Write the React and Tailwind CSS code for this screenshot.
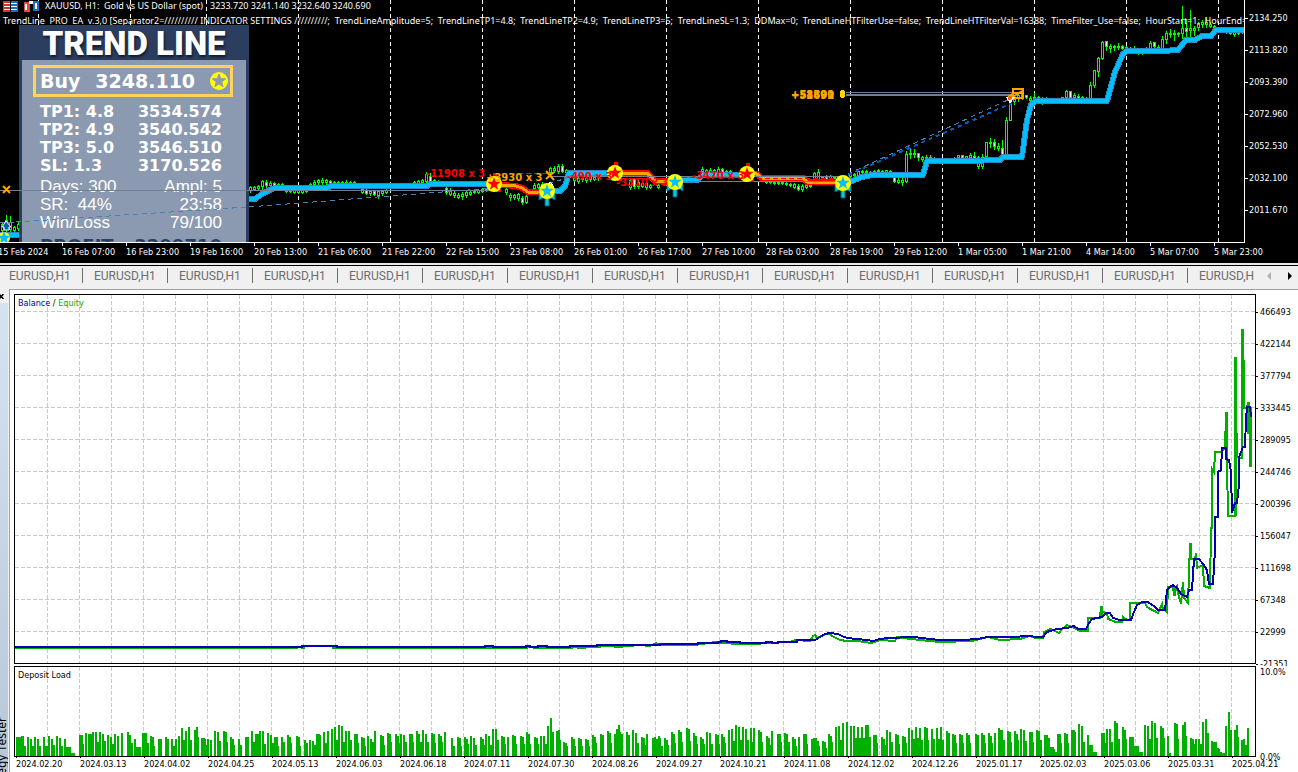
// [x, high, bodyTop, bodyBottom, low, bearish]
const CANDLES = [
  [2, 222, 224, 230, 231, 0], [6, 215, 220, 228, 231, 0], [10, 216, 222, 229, 232, 0], [14, 226, 227, 230, 231, 0], [18, 222, 224, 228, 230, 0],
  [250, 186, 187, 190, 192, 0], [254, 186, 187, 189, 190, 0], [258, 185, 186, 188, 189, 0], [262, 180, 181, 186, 189, 0], [266, 180, 182, 185, 187, 1],
  [270, 181, 183, 185, 187, 0], [274, 182, 183, 185, 186, 1], [278, 183, 184, 185, 186, 0], [282, 183, 184, 185, 186, 0], [286, 189, 190, 191, 192, 0],
  [290, 189, 190, 191, 192, 0], [294, 190, 190, 192, 193, 0], [298, 190, 190, 192, 193, 0], [302, 190, 190, 192, 193, 0], [306, 190, 190, 191, 192, 0],
  [310, 183, 184, 185, 187, 0], [314, 180, 182, 184, 186, 0], [318, 179, 180, 182, 184, 0], [322, 178, 180, 182, 184, 0], [326, 179, 180, 182, 184, 0],
  [330, 180, 181, 183, 184, 1], [334, 181, 182, 183, 184, 0], [338, 181, 182, 183, 184, 0], [342, 181, 182, 183, 184, 0], [346, 180, 182, 183, 184, 0],
  [350, 181, 182, 183, 184, 0], [354, 181, 182, 183, 184, 0], [362, 188, 189, 192, 193, 0], [366, 189, 190, 193, 194, 1], [370, 190, 191, 193, 195, 0],
  [374, 190, 191, 194, 195, 1], [378, 190, 191, 195, 198, 0], [382, 190, 191, 193, 195, 0], [386, 189, 190, 192, 193, 0], [414, 181, 182, 183, 184, 0],
  [418, 180, 181, 183, 184, 0], [422, 179, 180, 182, 184, 0], [426, 172, 174, 181, 182, 0], [430, 173, 176, 181, 182, 1], [434, 179, 180, 182, 183, 0],
  [438, 180, 181, 182, 184, 0], [446, 187, 188, 192, 194, 1], [450, 188, 190, 194, 195, 0], [454, 191, 193, 195, 197, 0], [458, 193, 195, 197, 198, 0],
  [462, 192, 194, 196, 199, 0], [466, 190, 192, 195, 197, 0], [470, 190, 192, 194, 195, 0], [474, 190, 191, 192, 193, 0], [478, 189, 190, 192, 193, 0],
  [482, 188, 189, 191, 192, 0], [486, 188, 189, 190, 191, 0], [506, 188, 189, 192, 194, 0], [510, 193, 195, 197, 200, 0], [514, 194, 195, 197, 199, 0],
  [518, 193, 194, 198, 200, 0], [522, 196, 198, 202, 204, 1], [526, 195, 196, 202, 203, 0], [534, 183, 185, 188, 190, 0], [538, 183, 184, 187, 189, 0],
  [542, 182, 184, 187, 188, 0], [550, 167, 168, 172, 174, 0], [554, 166, 168, 170, 172, 0], [558, 164, 166, 171, 173, 0], [562, 164, 166, 171, 172, 1],
  [566, 169, 170, 172, 174, 0], [574, 176, 178, 180, 181, 0], [578, 177, 178, 181, 183, 0], [582, 176, 178, 179, 181, 0], [586, 177, 178, 180, 182, 0],
  [590, 176, 177, 179, 181, 0], [594, 176, 177, 179, 180, 0], [598, 176, 177, 178, 180, 0], [630, 178, 180, 187, 189, 0], [634, 178, 179, 186, 188, 1],
  [638, 180, 182, 186, 188, 0], [642, 181, 183, 186, 187, 0], [646, 181, 183, 187, 189, 0], [650, 184, 185, 187, 188, 0], [658, 184, 185, 187, 188, 0],
  [702, 167, 169, 171, 173, 0], [706, 169, 170, 173, 175, 0], [710, 168, 170, 172, 175, 0], [714, 169, 170, 172, 173, 0], [718, 167, 169, 172, 173, 0],
  [722, 168, 169, 171, 172, 1], [726, 170, 171, 173, 174, 0], [730, 170, 171, 172, 174, 0], [766, 180, 181, 182, 183, 0], [770, 180, 181, 182, 183, 0],
  [774, 181, 182, 183, 184, 0], [778, 181, 182, 183, 184, 0], [782, 181, 182, 183, 184, 0], [786, 182, 183, 184, 185, 0], [790, 183, 184, 185, 186, 0],
  [794, 183, 184, 187, 188, 0], [798, 184, 186, 189, 190, 1], [802, 184, 186, 189, 191, 0], [806, 185, 185, 187, 188, 0], [810, 184, 185, 186, 187, 0],
  [814, 172, 173, 180, 181, 0], [818, 169, 172, 179, 180, 0], [822, 176, 177, 179, 180, 0], [826, 175, 177, 179, 180, 1], [830, 175, 176, 178, 179, 0],
  [834, 176, 177, 178, 180, 0], [850, 174, 174, 176, 177, 0], [854, 173, 174, 175, 176, 0], [858, 170, 171, 175, 176, 0], [862, 170, 171, 172, 174, 0],
  [866, 170, 171, 172, 174, 0], [870, 171, 172, 174, 176, 1], [874, 170, 171, 173, 174, 0], [878, 169, 170, 171, 173, 0], [882, 170, 171, 172, 173, 0],
  [886, 170, 170, 172, 173, 0], [890, 170, 171, 172, 174, 0], [894, 176, 177, 181, 182, 1], [898, 178, 180, 182, 183, 0], [902, 177, 180, 182, 185, 0],
  [906, 151, 154, 181, 182, 0], [910, 149, 153, 154, 158, 0], [914, 149, 153, 154, 157, 0], [918, 153, 153, 157, 160, 1], [922, 156, 157, 159, 161, 0],
  [926, 155, 157, 159, 160, 0], [930, 155, 157, 159, 161, 1], [934, 157, 158, 159, 161, 0], [950, 158, 158, 160, 161, 0], [954, 157, 158, 159, 160, 0],
  [958, 155, 155, 157, 159, 0], [962, 155, 155, 157, 158, 1], [966, 156, 156, 158, 159, 0], [970, 153, 155, 157, 158, 0], [974, 152, 156, 158, 160, 1],
  [978, 156, 157, 166, 168, 0], [982, 154, 157, 166, 168, 0], [986, 142, 142, 156, 157, 0], [990, 138, 142, 143, 147, 0], [994, 139, 142, 146, 149, 1],
  [998, 143, 146, 148, 150, 0], [1002, 140, 148, 155, 156, 1], [1006, 117, 120, 155, 156, 0], [1010, 102, 103, 120, 120, 0], [1014, 98, 99, 101, 104, 0],
  [1018, 94, 95, 98, 101, 0], [1022, 93, 94, 97, 99, 0], [1026, 95, 95, 97, 98, 1], [1030, 96, 98, 100, 102, 0], [1034, 93, 97, 98, 101, 0],
  [1038, 96, 97, 99, 101, 1], [1042, 97, 98, 100, 104, 0], [1046, 97, 98, 99, 100, 0], [1062, 97, 97, 99, 100, 0], [1066, 90, 91, 97, 98, 0],
  [1070, 91, 91, 97, 98, 1], [1074, 93, 95, 97, 100, 0], [1078, 94, 96, 98, 99, 1], [1082, 96, 97, 99, 100, 0], [1086, 97, 98, 99, 100, 0],
  [1090, 82, 85, 99, 100, 0], [1094, 70, 70, 85, 87, 0], [1098, 57, 58, 71, 76, 0], [1102, 41, 42, 58, 59, 0], [1106, 41, 41, 46, 50, 1],
  [1110, 44, 46, 48, 52, 0], [1114, 45, 46, 47, 50, 0], [1118, 43, 46, 47, 49, 0], [1122, 45, 46, 48, 49, 1], [1126, 46, 47, 49, 50, 0],
  [1130, 47, 48, 49, 51, 0], [1134, 46, 48, 50, 53, 0], [1138, 49, 50, 52, 54, 0], [1142, 49, 50, 52, 54, 0], [1146, 47, 48, 49, 50, 0],
  [1150, 41, 43, 48, 50, 0], [1154, 42, 42, 46, 48, 1], [1158, 45, 47, 49, 50, 0], [1162, 36, 39, 49, 50, 0], [1166, 31, 33, 39, 43, 0],
  [1170, 29, 33, 34, 37, 0], [1174, 30, 33, 34, 40, 0], [1178, 32, 33, 34, 36, 0], [1182, 6, 28, 33, 38, 0], [1186, 20, 28, 31, 36, 1],
  [1190, 10, 28, 30, 38, 0], [1194, 26, 28, 30, 35, 0], [1198, 22, 23, 27, 30, 0], [1202, 20, 22, 24, 27, 0], [1206, 17, 22, 24, 27, 0],
  [1210, 22, 24, 26, 27, 0], [1214, 25, 26, 28, 29, 1], [1226, 31, 31, 32, 33, 0], [1230, 31, 31, 33, 34, 0], [1234, 31, 32, 34, 36, 0],
  [1238, 31, 32, 33, 34, 1], [1242, 30, 31, 32, 33, 0],
];

const UP_TREND = [
  'M0 235H19',
  'M249 199H255L262 194L272 189L276 188H327L331 186H427L430 184H494',
  'M547 191L560 191L565 186L569 173H608H615',
  'M675 181L682 180H697L703 175H746',
  'M843 182L852 181L862 177L873 175H923L927 161H968L1000 160L1003 157H1022L1027 120L1031 105L1036 101H1107L1115 72L1123 54L1127 51H1163L1178 50L1186 40H1195L1202 36H1211L1216 30H1244',
];

const DOWN_TREND = [
  'M494 184L502 185L516 186L522 188L528 192H547',
  'M615 173H647L655 181L668 182H675',
  'M746 173L757 174L762 178H803L807 182H843',
];

const DAY_LINES = [38, 130, 206, 298, 390, 482, 574, 666, 758, 850, 942, 1034, 1126, 1218];

const SIGNALS = [
  [494, 184, 'sell'], [547, 191, 'buy'], [615, 173, 'sell'],
  [675, 182, 'buy'], [747, 174, 'sell'], [843, 183, 'buy'],
];

const PRICES = ['2134.250', '2113.820', '2093.390', '2072.960', '2052.530', '2032.100', '2011.670'];

const TIMES = [
  '15 Feb 2024', '16 Feb 07:00', '16 Feb 23:00', '19 Feb 16:00', '20 Feb 13:00', '21 Feb 06:00', '21 Feb 22:00',
  '22 Feb 15:00', '23 Feb 08:00', '26 Feb 01:00', '26 Feb 17:00', '27 Feb 10:00', '28 Feb 03:00', '28 Feb 19:00',
  '29 Feb 12:00', '1 Mar 05:00', '1 Mar 21:00', '4 Mar 14:00', '5 Mar 07:00', '5 Mar 23:00',
];

const TARGETS = [
  ['TP1: 4.8', '3534.574'],
  ['TP2: 4.9', '3540.542'],
  ['TP3: 5.0', '3546.510'],
  ['SL: 1.3', '3170.526'],
];

const STATS = [
  ['Days: 300', 'Ampl: 5'],
  ['SR:  44%', '23:58'],
  ['Win/Loss', '79/100'],
];

const BALANCE = 'M15 647H302V646H337V647H485V646H493V647H526V646H530V647H538V646H547V647H570V646H597V645H660V644H698V643H718V642H721V641H727V642H740V643H766V642H772V643H778V642H797V640H815L820 637L825 634L830 633L838 634L842 636L847 638L857 639L867 640L873 641L880 639L888 638H898L902 637L913 637L922 638L930 639L940 640L963 640L977 639L988 637H1017L1023 636L1043 637L1047 632L1057 629L1067 628L1074 626L1078 629H1086L1089 623L1092 619L1102 617L1106 613H1110L1113 618L1120 620H1131L1134 612L1137 605L1142 602H1148L1155 607L1158 610H1165L1167 590L1170 587L1173 585L1177 588L1181 594L1187 597L1189 590H1192L1194 559H1199L1203 564L1207 570L1209 584H1213L1215 550V517H1218V472L1221 470L1222 448H1226V459L1229 460L1231 472L1232 513L1235 503H1237L1239 485V457L1241 452L1243 447H1245L1246 419L1247 407H1250L1251 417';

const EQUITY = 'M15 648H298M301 648H305M332 648H527L530 646L534 648H570L575 647L580 648L593 647L610 646L618 647L640 645L650 646L656 643L660 645L695 645L715 642L722 643L740 644H757L765 643L790 642L795 640L810 641L813 636L815 635L817 638L828 633L832 636L840 640L847 641L857 641L872 643L880 640L895 641L897 637L903 638L920 640L940 642L972 641L980 639L988 637L1000 640L1020 639L1030 636L1036 638L1043 638L1044 632L1050 629L1053 630L1059 633L1062 629L1067 625L1072 627L1080 631H1088V618H1100L1101 607L1103 612L1107 613L1108 619L1116 622H1122L1123 617L1127 620H1130V603H1145L1147 607L1158 613L1162 604L1163 609L1167 612L1168 587H1173L1174 595L1177 587L1178 593L1181 604L1183 582L1184 598L1188 603L1189 573L1190 543L1191 559H1195L1196 553L1197 568L1203 565L1204 586L1210 588L1211 528H1212V469L1214 472L1215 452H1220L1225 449L1226 413L1227 463L1228 516H1235V358L1237 456L1240 458H1242V330L1244 370V408H1247L1248 402L1249 434L1250 407V467';

const EQUITY_SPIKES = 'M1101.5 606V618M1174.5 586V596M1190.5 543V559M1226.500 412V450M1235.500 357V516M1242.500 329V370M1243.500 370V408M1248.500 402V434M1250.500 407V467';

// [x, first column height, second column height]
const LOAD = [
  [16, 19, 19], [19, 19, 20], [22, 20, 10], [24, 10], [27, 19], [30, 17, 10], [34, 19], [37, 17, 10], [43, 19, 10], [46, 10], [48, 20], [51, 17, 11], [56, 20], [59, 18, 10],
  [64, 17, 9], [67, 9, 9], [71, 3, 3], [79, 21, 21], [82, 12], [85, 23], [88, 22, 22], [92, 24], [95, 24, 14], [99, 24], [102, 22, 15], [107, 21], [110, 19, 12],
  [114, 22], [117, 20], [121, 23], [127, 24, 21], [131, 13], [134, 17, 9], [137, 9, 9], [142, 23, 23], [145, 23, 13], [150, 20, 19], [153, 10], [158, 17, 17], [165, 19, 17],
  [167, 10], [171, 17, 10], [175, 17], [178, 20], [181, 28, 16], [185, 25], [188, 29, 16], [194, 26, 29], [197, 19], [201, 18, 18], [204, 17, 11], [207, 17], [210, 16],
  [214, 25], [217, 24, 15], [223, 25, 24], [226, 14], [230, 19, 17], [233, 11], [238, 17, 11], [245, 19, 19], [247, 10], [251, 25, 14], [255, 22, 22], [259, 25],
  [262, 25, 12], [267, 23], [270, 21, 13], [274, 19, 19], [277, 10], [281, 19], [283, 14], [287, 21, 19], [290, 13], [296, 20, 19], [299, 10], [304, 16, 13],
  [309, 16], [312, 15, 11], [316, 22, 22], [319, 21], [323, 24, 13], [327, 25], [331, 27], [334, 29, 16], [338, 31], [341, 30, 14], [345, 25], [348, 25, 16],
  [354, 22, 22], [357, 13], [361, 19, 18], [364, 10], [367, 20], [370, 17, 14], [374, 25], [380, 21, 20], [383, 11], [387, 23, 22], [390, 14], [395, 22, 20], [398, 13],
  [400, 22], [403, 21, 14], [409, 22, 22], [412, 14], [416, 25], [418, 22, 14], [422, 26], [425, 22, 14], [431, 23, 22], [434, 13], [438, 22, 20], [441, 14], [444, 24],
  [451, 18], [453, 10], [457, 19, 18], [460, 10], [464, 19, 17], [467, 12], [470, 20], [473, 18, 11], [480, 19], [482, 17, 11], [485, 22], [488, 20, 11], [492, 27],
  [495, 27, 16], [501, 20, 19], [504, 12], [507, 19], [512, 21, 20], [515, 12], [520, 20, 19], [523, 12], [526, 24, 22], [529, 12], [534, 19, 18], [537, 12],
  [540, 20], [543, 20, 12], [547, 30], [550, 38, 24], [556, 25, 26], [559, 16], [563, 14, 13], [566, 10], [571, 19, 17], [574, 10], [578, 18, 17], [581, 10],
  [585, 17, 16], [588, 10], [592, 21, 19], [595, 13], [600, 22, 21], [602, 13], [607, 25, 23], [610, 13], [614, 22], [616, 27, 31], [619, 24, 22], [626, 24, 21],
  [628, 13], [632, 26], [635, 23, 13], [641, 19, 18], [644, 11], [646, 22], [652, 18, 19], [656, 17, 20], [659, 18, 10], [664, 18, 16], [667, 11], [671, 24, 22],
  [674, 13], [678, 26, 24], [681, 14], [686, 28, 27], [689, 15], [693, 23, 20], [696, 12], [700, 19, 17], [703, 12], [706, 24], [709, 23, 12], [715, 22, 21],
  [718, 12], [721, 22, 19], [724, 13], [728, 26], [731, 27, 15], [735, 31], [738, 29, 16], [742, 29], [745, 27, 16], [750, 28, 14], [753, 28], [758, 26, 24],
  [761, 14], [766, 20, 18], [769, 11], [771, 25], [777, 22, 22], [780, 14], [784, 23], [786, 22, 14], [792, 19, 17], [795, 10], [798, 19], [803, 22, 22],
  [806, 12], [811, 17, 18], [815, 18, 15], [818, 10], [822, 15, 14], [825, 8], [828, 22, 20], [831, 14], [835, 29], [838, 30, 16], [842, 33], [846, 34],
  [850, 30], [853, 30, 18], [857, 29, 18], [861, 29, 18], [865, 31], [867, 31, 19], [873, 21, 21], [876, 13], [881, 19, 17], [884, 11], [886, 26], [889, 24, 14],
  [895, 22, 21], [898, 12], [902, 20, 19], [905, 13], [908, 28], [911, 26, 17], [915, 29, 18], [919, 28, 16], [924, 29, 28], [927, 16], [931, 27, 17], [936, 28, 17],
  [940, 29, 16], [946, 25, 23], [948, 13], [952, 22, 21], [955, 13], [959, 22, 21], [962, 13], [966, 23, 21], [969, 13], [975, 22, 21], [977, 13], [981, 23, 21],
  [984, 13], [988, 23, 20], [991, 13], [994, 23], [998, 28, 26], [1001, 26, 16], [1007, 25, 24], [1010, 14], [1014, 25, 22], [1017, 16], [1020, 27], [1023, 26, 15],
  [1029, 24, 24], [1032, 14], [1036, 26], [1038, 25, 16], [1044, 21, 20], [1046, 21, 18], [1050, 9, 9], [1053, 7, 4], [1057, 22, 22], [1060, 13], [1064, 23, 22],
  [1067, 13], [1071, 26, 26], [1074, 24], [1078, 32], [1081, 30, 14], [1087, 21], [1089, 11, 11], [1093, 4, 4], [1101, 23, 23], [1104, 13], [1106, 27], [1109, 27, 14],
  [1114, 35], [1116, 33, 17], [1122, 29, 26], [1125, 17], [1129, 19, 19], [1132, 19, 10], [1135, 10, 10], [1139, 4, 4], [1144, 31], [1147, 30, 17], [1151, 35],
  [1154, 33, 18], [1160, 30, 28], [1163, 18], [1167, 20], [1169, 3], [1174, 33, 32], [1177, 17], [1182, 31, 34], [1185, 20], [1190, 18, 17], [1193, 12], [1195, 17],
  [1198, 17, 12], [1202, 34], [1205, 37, 23], [1211, 15, 14], [1215, 14, 8], [1218, 7, 4], [1221, 3, 3], [1225, 30], [1228, 44, 26], [1234, 26, 31], [1237, 19],
  [1241, 16], [1243, 17, 11], [1247, 28],
];

const BALANCES = ['466493', '422144', '377794', '333445', '289095', '244746', '200396', '156047', '111698', '67348', '22999', '-21351'];

const DATES = [
  '2024.02.20', '2024.03.13', '2024.04.02', '2024.04.25', '2024.05.13', '2024.06.03', '2024.06.18', '2024.07.11', '2024.07.30', '2024.08.26',
  '2024.09.27', '2024.10.21', '2024.11.08', '2024.12.02', '2024.12.26', '2025.01.17', '2025.02.03', '2025.03.06', '2025.03.31', '2025.04.21',
];

const STAR = 'M0 -7L1.7 -2.3L6.7 -2.2L2.7 0.9L4.1 5.7L0 2.8L-4.1 5.7L-2.7 0.9L-6.7 -2.2L-1.7 -2.3Z';

function Candle({ x, high, top, bottom, low, bearish }) {
  return (
    <g stroke="#00ff00" fill={bearish ? '#ffffff' : '#000000'}>
      <path d={`M${x} ${high}V${low + 1}`} transform="translate(.5 0)" />
      <rect x={x - 0.5} y={top + 0.5} width="2" height={Math.max(1, bottom - top)} />
    </g>
  );
}

function Signal({ x, y, side }) {
  const buy = side === 'buy';
  return (
    <g transform={`translate(${x} ${y})`} shapeRendering="auto">
      {buy ? (
        <path d="M-8 2V9L-2 6V15H2V6L8 9V2Z" fill="#00ced1" stroke="#005a8c" />
      ) : (
        <path d="M-1 -11H3V-4H-1ZM2 5H7V8H2Z" fill="#ff0000" />
      )}
      <circle r="8" fill="#ffff00" />
      <path d={STAR} fill={buy ? '#00bfff' : '#ff0000'} />
    </g>
  );
}

function Grid({ id, rows }) {
  return (
    <>
      <defs>
        <pattern id={`${id}-cols`} width="32" height="6" patternUnits="userSpaceOnUse">
          <path d="M0.5 0V4" stroke="#c8c8c8" />
        </pattern>
        <pattern id={`${id}-rows`} width="6" height="32" patternUnits="userSpaceOnUse">
          <path d="M0 0.5H4" stroke="#c8c8c8" />
        </pattern>
      </defs>
      <svg x="32" width="100%" height="100%"><rect width="100%" height="100%" fill={`url(#${id}-cols)`} /></svg>
      {rows && <svg y="16" width="100%" height="100%"><rect width="100%" height="100%" fill={`url(#${id}-rows)`} /></svg>}
    </>
  );
}

function PriceChart() {
  return (
    <svg className="absolute inset-0 h-full w-full" shapeRendering="crispEdges">
      {DAY_LINES.map((x) => (
        <path key={x} d={`M${x + 0.5} 0V242`} stroke="#ffffff" strokeDasharray="4 3" />
      ))}
      {CANDLES.map(([x, high, top, bottom, low, bearish]) => (
        <Candle key={x} x={x} high={high} top={top} bottom={bottom} low={low} bearish={bearish} />
      ))}
      <g fill="none" strokeLinejoin="round">
        {UP_TREND.map((d) => <path key={d} d={d} stroke="#2f86c4" strokeWidth="6" />)}
        {UP_TREND.map((d) => <path key={d} d={d} stroke="#00bfff" strokeWidth="4" />)}
        {DOWN_TREND.map((d) => <path key={d} d={d} stroke="#ff0000" strokeWidth="6" />)}
        {DOWN_TREND.map((d) => <path key={d} d={d} stroke="#ffa500" strokeWidth="3" />)}
      </g>
    </svg>
  );
}

function TradeLayer() {
  return (
    <svg className="absolute inset-0 h-full w-full" shapeRendering="crispEdges">
      <g fill="none" stroke="#708090">
        <path d="M0 190.5H494M548 176.5H843M675 181.5H843" />
        <path d="M846 92.5H1014" />
        <path d="M846 95H1014" strokeWidth="2" />
      </g>
      <g fill="none" stroke="#4682b4">
        <path d="M0 222.5H14" stroke="#708090" />
        <path d="M16 222L248 207L494 188M548 184L570 177M848 174L1012 98" strokeDasharray="5 4" />
        <path d="M848 175L1012 103" stroke="#0060b8" strokeWidth="2" strokeDasharray="4 4" />
      </g>
      <path d="M494 173H548M622 178H675M682 177H745M757 178H843" stroke="#ff0000" fill="none" strokeDasharray="5 3" />

      {/* Closed trade markers */}
      <g stroke="#ffa500" fill="none" strokeWidth="2" shapeRendering="auto">
        <path d="M3 186L10 193M10 186L3 193M546 171L554 180M554 172L546 179" />
        <rect x="1013" y="89" width="10" height="9" />
        <path d="M1008 97L1014 93H1023M1010 99L1022 91" />
      </g>
      <path d="M671 178L679 186M679 178L671 186" stroke="#ff0000" strokeWidth="2" />
      <path d="M1006 97H1015L1010 104Z" fill="#ffffff" />
      <circle cx="1010" cy="98" r="2" fill="#ff6020" />
      <path d="M547 187L550 182L554 187" stroke="#ffffff" fill="none" />
      <ellipse cx="842.5" cy="94" rx="3" ry="4" fill="#ffd700" />

      {SIGNALS.map(([x, y, side]) => <Signal key={x} x={x} y={y} side={side} />)}
      <g transform="translate(4 238)" shapeRendering="auto">
        <circle r="6" fill="#ffff00" />
        <path d={STAR} fill="#00bfff" />
      </g>
      <path d="M6 221L11 227H9V230H4V227H2Z" fill="#0060b8" stroke="#ffffff" shapeRendering="auto" />

      <g className="text-[10px] font-bold" fontFamily="DejaVu Sans, sans-serif" fill="#ff0000" shapeRendering="auto">
        <text x="426" y="177">-11908 x 3</text>
        <text x="567" y="180">-490 x 3</text>
        <text x="616" y="186">-3310 x 3</text>
        <text x="692" y="179">-3470 x 3</text>
        <g fill="#ffa500">
          <text x="486" y="181">+3930 x 3</text>
          <text x="791" y="98">+58890</text>
          <text x="791" y="98">+51301</text>
          <text x="791" y="99">+52692</text>
        </g>
      </g>
    </svg>
  );
}

function TrendPanel() {
  return (
    <section className="absolute top-[25px] left-[19px] flex h-[217px] w-[230px] flex-col overflow-hidden bg-[#2c3e60] px-[3px] text-white">
      <h2 className="h-[35px] text-center font-[Roboto,sans-serif] text-[33px] leading-[38px] font-black whitespace-nowrap [text-shadow:1px_2px_3px_#101828]">
        TREND LINE
      </h2>
      <div className="flex-1 bg-[#8c9ab1] pt-[5px] pr-[13px] pl-[11px]">
        <div className="flex h-8 items-center justify-between border-[3px] border-[#ffd35c] pr-[2px] pl-1 font-['DejaVu_Sans',sans-serif] text-[19px] font-bold whitespace-nowrap">
          <span>Buy</span>
          <span>3248.110</span>
          <svg className="size-[18px]" viewBox="-9 -9 18 18">
            <circle r="9" fill="#ffff00" />
            <path d={STAR} fill="#8c9ab1" stroke="#8c9ab1" />
          </svg>
        </div>
        <dl className="pt-[6px] pr-[11px] pl-[7px] font-['DejaVu_Sans',sans-serif] text-[16px] leading-[18px] font-bold">
          {TARGETS.map(([label, value]) => (
            <div key={label} className="flex justify-between">
              <dt>{label}</dt>
              <dd>{value}</dd>
            </div>
          ))}
        </dl>
        <dl className="pt-[3px] pr-[11px] pl-[7px] font-['Liberation_Sans',sans-serif] text-[17px] leading-[18px] whitespace-pre">
          {STATS.map(([label, value]) => (
            <div key={label} className="flex justify-between">
              <dt>{label}</dt>
              <dd>{value}</dd>
            </div>
          ))}
        </dl>
        <div className="flex justify-between pt-[5px] pr-[11px] pl-[7px] font-['DejaVu_Sans',sans-serif] text-[18px] leading-[18px] font-bold text-[#2c3e60]">
          <span>PROFIT</span>
          <span>3299710</span>
        </div>
      </div>
    </section>
  );
}

function ChartWindow() {
  return (
    <section className="bg-black font-['DejaVu_Sans_Condensed','DejaVu_Sans',sans-serif] text-[9px] leading-3 text-white">
      <div className="flex h-[243px]">
        <div className="relative flex-1 overflow-hidden border-r border-b border-white">
          <PriceChart />
          <header className="relative font-['Noto_Sans',sans-serif] whitespace-pre">
            <h1 className="flex h-3 items-center gap-[6px] pl-[3px]">
              <svg className="h-[11px] w-[15px]" viewBox="0 0 15 11">
                <path d="M0 0H7V11H0Z" fill="#d83030" />
                <path d="M8 0H15V11H8Z" fill="#1b6ec2" />
                <path d="M1 2.500H7M1 5.500H7M1 8.500H7M8 2.500H14M8 5.500H14M8 8.500H14" stroke="#ffffff" />
              </svg>
              <svg className="h-[11px] w-[15px]" viewBox="0 0 15 11">
                <path d="M0 1H6V11H0Z" fill="#e04848" />
                <path d="M9 0H15V10H9Z" fill="#1b6ec2" />
                <path d="M1 3H3V9H1ZM11 2H13V8H11ZM5 0H9V3H5Z" fill="#ffffff" />
              </svg>
              <span>XAUUSD, H1:  Gold vs US Dollar (spot)   3233.720 3241.140 3232.640 3240.690</span>
            </h1>
            <p className="pt-[3px] pl-[3px]">
              TrendLine  PRO  EA  v.3,0 [Separator2=////////// INDICATOR SETTINGS //////////;  TrendLineAmplitude=5;  TrendLineTP1=4.8;  TrendLineTP2=4.9;  TrendLineTP3=5;  TrendLineSL=1.3;  DDMax=0;  TrendLineHTFilterUse=false;  TrendLineHTFilterVal=16388;  TimeFilter_Use=false;  HourStart=1;  HourEnd=23
            </p>
          </header>
          <TrendPanel />
          <TradeLayer />
        </div>
        <ul className="w-[53px] pt-[2px]">
          {PRICES.map((price) => (
            <li key={price} className="flex h-8 items-center gap-px">
              <span className="h-px w-[3px] bg-white" />
              {price}
            </li>
          ))}
        </ul>
      </div>
      <ol className="-ml-[2px] flex h-5 overflow-hidden whitespace-nowrap">
        {TIMES.map((time) => (
          <li key={time} className="w-16 shrink-0">
            <span className="block h-[3px] w-px bg-white" />
            {time}
          </li>
        ))}
      </ol>
    </section>
  );
}

function ChartTabs() {
  return (
    <nav className="flex h-[22px] items-center border-t border-black bg-[#f0f0f0] pb-[2px]">
      <div className="flex flex-1 overflow-hidden">
        {Array.from({ length: 15 }, (_, i) => (
          <button key={i} className="flex w-[85px] shrink-0 items-center justify-between pr-[2px] pl-[9px] font-[Roboto,sans-serif] text-[12px] leading-4 text-[#6d6d6d]">
            EURUSD,H1
            <span className="h-[15px] w-px bg-[#6d6d6d]" />
          </button>
        ))}
      </div>
      <div className="flex w-[44px] items-center justify-between pr-[6px] pl-[13px]">
        <button aria-label="Scroll tabs left">
          <svg className="h-2 w-1" viewBox="0 0 4 8"><path d="M4 0V8L0 4Z" fill="#b0b0b0" /></svg>
        </button>
        <button aria-label="Scroll tabs right">
          <svg className="h-2 w-1" viewBox="0 0 4 8"><path d="M0 0V8L4 4Z" fill="#000000" /></svg>
        </button>
      </div>
    </nav>
  );
}

function StrategyTester() {
  return (
    <section className="flex min-h-0 flex-1 border-t-2 border-[#f0f0f0] bg-white">
      <aside className="flex w-[9px] shrink-0 flex-col overflow-hidden border-r border-[#f0f0f0] bg-linear-to-b from-[#d6e4f2] to-[#b8c7d8]">
        <button aria-label="Close" className="flex h-[14px] items-center bg-[#f0f0f0]">
          <svg className="h-[5px] w-[4px]" viewBox="0 0 4 5">
            <path d="M-1 0L3.500 5M3.500 0L-1 5" stroke="#000000" strokeWidth="1.500" />
          </svg>
        </button>
        <h2 className="mt-auto -mb-[29px] rotate-180 self-end font-['Noto_Sans',sans-serif] text-[12px] leading-[12px] whitespace-nowrap [writing-mode:vertical-rl]">
          Strategy Tester
        </h2>
      </aside>
      <div className="flex min-w-0 flex-1 border-t border-l border-[#a0a0a0] pt-1 pl-1 font-['DejaVu_Sans_Condensed','DejaVu_Sans',sans-serif] text-[9px] leading-3">
        <div className="min-w-0 flex-1">
          <figure className="relative h-[370px] overflow-hidden border border-black">
            <svg className="absolute inset-0 h-full w-full" shapeRendering="crispEdges">
              <Grid id="balance" rows />
              <g transform="translate(-15 -295)" fill="none" strokeWidth="2">
                <path d={EQUITY} stroke="#00b000" />
                <path d={EQUITY_SPIKES} stroke="#00b000" strokeWidth="3" />
                <path d={BALANCE} stroke="#0000b0" />
              </g>
            </svg>
            <figcaption className="relative pt-[2px] pl-[3px]">
              <span className="text-[#0000b0]">Balance</span> / <span className="text-[#00b000]">Equity</span>
            </figcaption>
          </figure>
          <figure className="relative mt-[2px] h-[91px] overflow-hidden border border-black">
            <svg className="absolute inset-0 h-full w-full" shapeRendering="crispEdges">
              <Grid id="load" />
              <g fill="#00b000" transform="translate(-15 0)">
                {LOAD.map(([x, first, second = 0]) => (
                  <path key={x} d={`M${x} 89v${-first}h2V${89 - second}h2V89Z`} />
                ))}
              </g>
            </svg>
            <figcaption className="relative pt-[2px] pl-[3px]">Deposit Load</figcaption>
          </figure>
          <ol className="flex whitespace-nowrap">
            {DATES.map((date) => (
              <li key={date} className="w-16 shrink-0 pl-[2px]">
                <span className="block h-px w-px bg-black" />
                {date}
              </li>
            ))}
          </ol>
        </div>
        <div className="w-[42px] shrink-0">
          <ul className="h-[372px] overflow-hidden pt-[2px]">
            {BALANCES.map((value) => (
              <li key={value} className="flex h-8 items-center gap-[2px]">
                <span className="h-px w-[2px] bg-black" />
                {value}
              </li>
            ))}
          </ul>
          <div className="flex h-[97px] flex-col justify-between pl-1">
            <span>10.0%</span>
            <span>0.0%</span>
          </div>
        </div>
      </div>
    </section>
  );
}

export default function App() {
  return (
    <main className="flex h-screen flex-col overflow-hidden bg-white">
      <ChartWindow />
      <div className="h-[2px] shrink-0 bg-[#e8e8e8]" />
      <ChartTabs />
      <StrategyTester />
    </main>
  );
}
